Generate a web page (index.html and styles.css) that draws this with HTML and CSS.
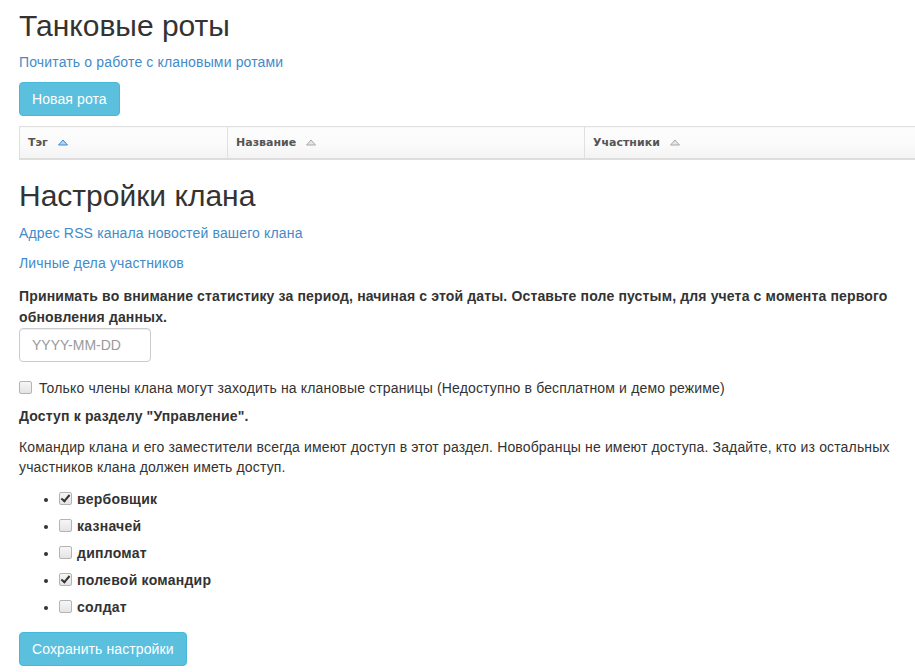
FILE: index.html
```html
<!DOCTYPE html>
<html lang="ru">
<head>
<meta charset="utf-8">
<title>Танковые роты</title>
<link rel="stylesheet" href="styles.css">
</head>
<body>
<div class="page">
  <h1 class="heading heading-first">Танковые роты</h1>
  <p class="link-row link-row-top"><a href="#">Почитать о работе с клановыми ротами</a></p>
  <button type="button" class="btn btn-info">Новая рота</button>

  <table class="companies">
    <thead>
      <tr>
        <th class="col-tag">Тэг <svg class="sort sort-active" width="10" height="7" viewBox="0 0 10 7"><polygon points="0.5,6 5,1 9.5,6" /></svg></th>
        <th class="col-name">Название <svg class="sort" width="10" height="7" viewBox="0 0 10 7"><polygon points="0.5,6 5,1 9.5,6" /></svg></th>
        <th class="col-members">Участники <svg class="sort" width="10" height="7" viewBox="0 0 10 7"><polygon points="0.5,6 5,1 9.5,6" /></svg></th>
      </tr>
    </thead>
  </table>

  <h1 class="heading heading-second">Настройки клана</h1>
  <p class="link-row"><a href="#">Адрес RSS канала новостей вашего клана</a></p>
  <p class="link-row link-row-last"><a href="#">Личные дела участников</a></p>

  <form class="settings">
    <label class="field-label" for="since">Принимать во внимание статистику за период, начиная с этой даты. Оставьте поле пустым, для учета с момента первого обновления данных.</label>
    <input id="since" type="text" class="form-control" placeholder="YYYY-MM-DD">

    <label class="checkbox-line"><input type="checkbox" class="cb">Только члены клана могут заходить на клановые страницы (Недоступно в бесплатном и демо режиме)</label>

    <p class="section-title">Доступ к разделу "Управление".</p>
    <p class="section-text">Командир клана и его заместители всегда имеют доступ в этот раздел. Новобранцы не имеют доступа. Задайте, кто из остальных участников клана должен иметь доступ.</p>

    <ul class="roles">
      <li><label><input type="checkbox" class="cb" checked>вербовщик</label></li>
      <li><label><input type="checkbox" class="cb">казначей</label></li>
      <li><label><input type="checkbox" class="cb">дипломат</label></li>
      <li><label><input type="checkbox" class="cb" checked>полевой командир</label></li>
      <li><label><input type="checkbox" class="cb">солдат</label></li>
    </ul>

    <button type="submit" class="btn btn-info">Сохранить настройки</button>
  </form>
</div>
</body>
</html>
```

FILE: styles.css
```css
html, body {
  margin: 0;
  padding: 0;
  background: #fff;
  overflow-x: hidden;
}

body {
  font-family: "Liberation Sans", Arial, sans-serif;
  font-size: 14px;
  line-height: 20px;
  color: #333;
  letter-spacing: 0.15px;
}

.page {
  width: 935px;
  padding-left: 19px;
}

a {
  color: #428bca;
  text-decoration: none;
}

p {
  margin: 0;
}

.heading {
  font-family: "Liberation Sans", Arial, sans-serif;
  font-weight: normal;
  font-size: 30px;
  line-height: 33px;
  letter-spacing: 0;
  color: #333;
  margin: 0;
}

.heading-first {
  margin-top: 9px;
  margin-bottom: 10px;
}

.heading-second {
  margin-top: 19px;
  margin-bottom: 11px;
}

.link-row {
  margin-bottom: 10px;
}

.link-row-last {
  margin-bottom: 13px;
}

.btn {
  display: block;
  font-family: "Liberation Sans", Arial, sans-serif;
  font-size: 14px;
  line-height: 20px;
  letter-spacing: 0.1px;
  padding: 6px 12px;
  height: 34px;
  border-radius: 4px;
  border: 1px solid transparent;
  cursor: pointer;
}

.btn-info {
  color: #fff;
  background: #5bc0de;
  border-color: #46b8da;
}

.companies {
  margin-top: 10px;
  width: 100%;
  border-collapse: collapse;
  table-layout: fixed;
}

.companies th {
  font-family: "DejaVu Sans", Verdana, sans-serif;
  font-size: 11px;
  font-weight: bold;
  letter-spacing: 0;
  color: #555;
  text-align: left;
  height: 31px;
  padding: 0 8px;
  border-top: 1px solid #e0e0e0;
  border-left: 1px solid #e0e0e0;
  border-bottom: 2px solid #dddddd;
  background: linear-gradient(to bottom, #fcfcfc 0%, #fbfbfb 50%, #f3f3f3 100%);
  vertical-align: middle;
}

.col-tag { width: 191px; }
.col-name { width: 340px; }

.sort {
  margin-left: 6px;
  vertical-align: 0;
}

.sort polygon {
  fill: #e6e6e6;
  stroke: #a8a8a8;
  stroke-width: 1;
}

.sort-active polygon {
  fill: #b5d4f2;
  stroke: #3f89d6;
}

.settings {
  margin: 0;
}

.field-label {
  display: block;
  font-weight: bold;
  line-height: 21px;
  margin-bottom: 0;
  width: 890px;
}

.form-control {
  display: block;
  box-sizing: border-box;
  width: 132px;
  height: 34px;
  margin-top: 0;
  padding: 6px 12px;
  font-family: "Liberation Sans", Arial, sans-serif;
  font-size: 14px;
  color: #555;
  border: 1px solid #ccc;
  border-radius: 4px;
  box-shadow: inset 0 1px 1px rgba(0,0,0,0.075);
}

.form-control::placeholder {
  color: #999;
}

.checkbox-line {
  display: block;
  margin-top: 16px;
  margin-bottom: 8px;
}

.cb {
  -webkit-appearance: none;
  appearance: none;
  box-sizing: border-box;
  width: 13px;
  height: 13px;
  margin: 0 7px 0 0;
  border: 1px solid #b4b4b4;
  border-radius: 2px;
  background: linear-gradient(to bottom, #f6f6f6 0%, #e4e4e4 100%);
  vertical-align: -1px;
  position: relative;
}

.cb:checked::after {
  content: "";
  position: absolute;
  left: 3px;
  top: 0px;
  width: 3px;
  height: 7px;
  border-right: 2px solid #333;
  border-bottom: 2px solid #333;
  transform: rotate(40deg);
}

.section-title {
  font-weight: bold;
  margin-bottom: 11px;
}

.section-text {
  width: 895px;
  margin-bottom: 12px;
}

.roles {
  margin: 0;
  padding-left: 40px;
}

.roles li {
  font-weight: bold;
  line-height: 20px;
  letter-spacing: 0.25px;
  margin-bottom: 7px;
}

.roles li:last-child {
  margin-bottom: 0;
}

.roles .cb {
  margin-right: 5px;
}

.settings .btn {
  margin-top: 15px;
}
```
